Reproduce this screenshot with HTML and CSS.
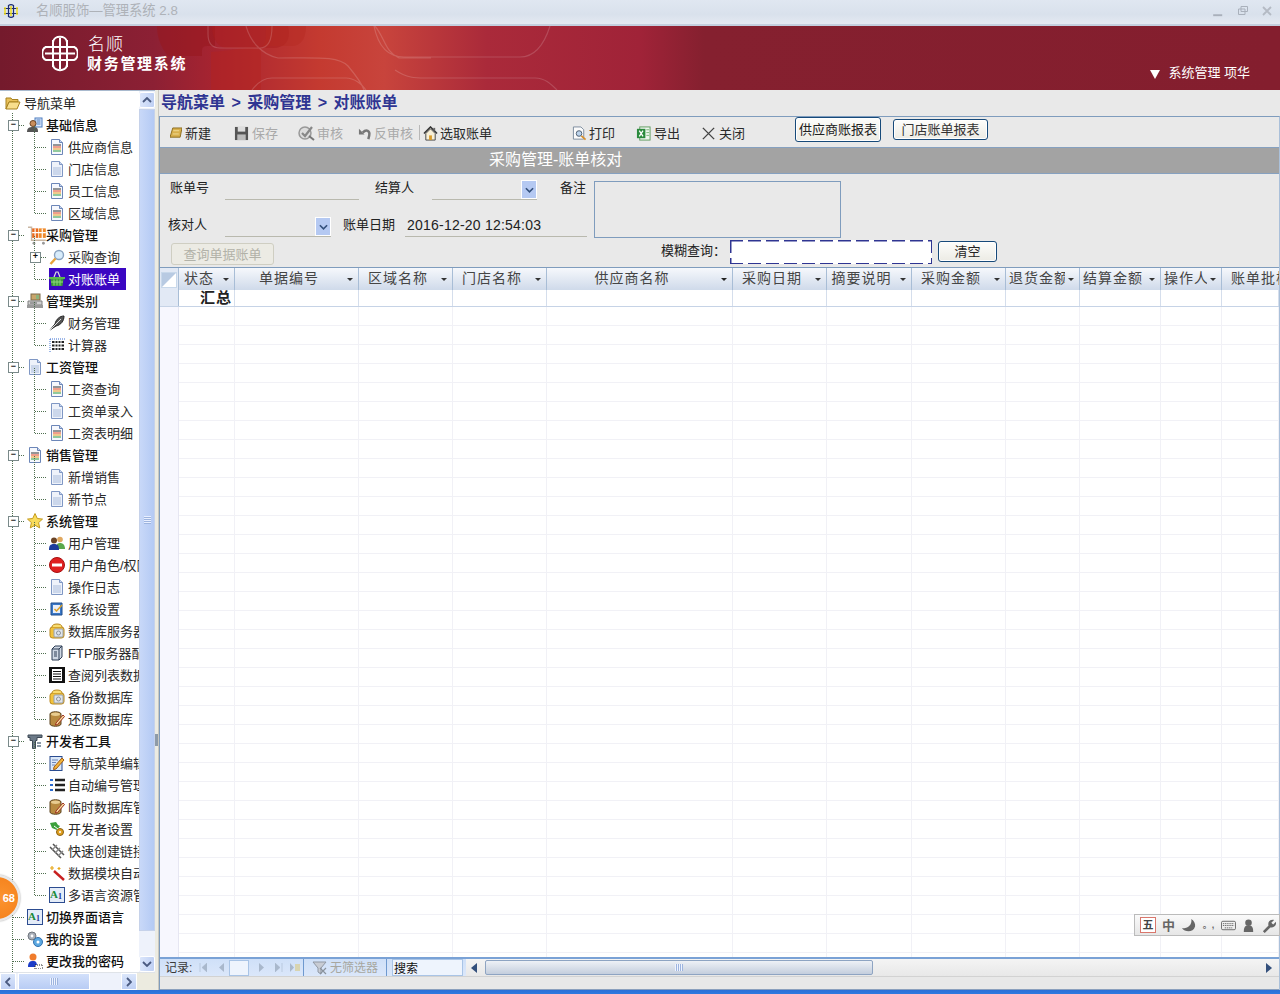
FILE: index.html
```html
<!DOCTYPE html>
<html lang="zh-CN">
<head>
<meta charset="utf-8">
<title>名顺服饰—管理系统 2.8</title>
<link rel="stylesheet" href="styles.css">
</head>
<body>
<svg class="defs" width="0" height="0" aria-hidden="true">
  <symbol id="doc" viewBox="0 0 16 16"><path d="M2.500.5h8l3 3v12h-11z" fill="#f6f8fd" stroke="#6c86b8"/><path d="M10.500.5v3h3" fill="#c8d6ee" stroke="#6c86b8"/><path d="M4 6h8" stroke="#333"/><path d="M4 8h8" stroke="#e8441c"/><path d="M4 10h8" stroke="#e89a1c"/><path d="M4 12h8" stroke="#2c9a3c"/></symbol>
  <symbol id="docg" viewBox="0 0 16 16"><path d="M2.500.5h8l3 3v12h-11z" fill="#eef2fa" stroke="#7f97c4"/><path d="M10.500.5v3h3" fill="#c8d6ee" stroke="#7f97c4"/><path d="M4 7h8M4 9h8M4 11h8M4 13h8" stroke="#a9bcdc"/></symbol>
  <symbol id="folder" viewBox="0 0 16 16"><path d="M1 3h5l1 1.500h6V7H4L1 14z" fill="#e9c15a" stroke="#a7811f"/><path d="M4 7h11l-3 7H1z" fill="#f8de8c" stroke="#a7811f"/></symbol>
  <symbol id="person" viewBox="0 0 16 16"><rect x="8" y="1" width="7" height="9" fill="#dbe8fb" stroke="#4c7cc0"/><path d="M9.500 3h4M9.500 5h4M9.500 7h4" stroke="#4c7cc0"/><circle cx="6" cy="6.500" r="3" fill="#c98d5c" stroke="#6a4426"/><path d="M0 15c0-4 2-5 6-5s5 1 5 5z" fill="#555"/></symbol>
  <symbol id="cart" viewBox="0 0 16 16"><path d="M0 1h3v11h12" fill="none" stroke="#c9b7a4" stroke-width="1.200"/><rect x="3.500" y="2" width="5" height="8" fill="#e86a1e"/><rect x="9" y="2" width="6" height="8" fill="#f08a2a"/><path d="M3.500 5.500h11.500M6 2v8M12 2v8" stroke="#fff"/><circle cx="5" cy="14.500" r="1.200" fill="#999"/><circle cx="13" cy="14.500" r="1.200" fill="#999"/></symbol>
  <symbol id="search" viewBox="0 0 16 16"><circle cx="10" cy="6" r="4.500" fill="#d8ecfb" stroke="#8aa3c0" stroke-width="1.400"/><path d="M6.500 9.500L1.500 15" stroke="#e8a23a" stroke-width="2.400"/></symbol>
  <symbol id="basket" viewBox="0 0 16 16"><path d="M5 6l2-5h2l2 5" fill="none" stroke="#ddd" stroke-width="1.200"/><path d="M0 6h16v2H0z" fill="#5cb84c"/><path d="M1.500 8h13l-1 7h-11z" fill="#3e9a3a"/><path d="M5 8.500v6M8 8.500v6M11 8.500v6M2 11h12" stroke="#8fd67c"/></symbol>
  <symbol id="register" viewBox="0 0 16 16"><rect x="4" y="1" width="9" height="6" fill="#c9a56a" stroke="#7a6a4a"/><path d="M9 2h3v4H9z" fill="#8bb37c"/><path d="M1 8h14v4H1z" fill="#cfcfcf" stroke="#808080"/><path d="M0 12h16v3H0z" fill="#9a9a9a"/><path d="M3 10h7" stroke="#666"/></symbol>
  <symbol id="feather" viewBox="0 0 16 16"><path d="M1 15L6 9C7 4 11 1 15 1c0 5-3 9-8 10z" fill="#555" stroke="#222"/><path d="M1 15L12 4" stroke="#ddd"/></symbol>
  <symbol id="calc" viewBox="0 0 16 16"><path d="M1 2h15" stroke="#3a6fd0" stroke-dasharray="1 1"/><path d="M1 2v13" stroke="#3a6fd0" stroke-dasharray="1 1"/><path d="M3 4h12v2H3zM3 7.500h12v2H3zM3 11h12v2H3z" fill="#222"/><path d="M6 4v9M9 4v9M12 4v9" stroke="#fff"/></symbol>
  <symbol id="star" viewBox="0 0 16 16"><path d="M8 .5l2.300 5 5.200.6-3.900 3.500 1.100 5.300L8 12.200l-4.700 2.700 1.100-5.300L.5 6.100l5.200-.6z" fill="#f9dc5c" stroke="#c49a1c"/></symbol>
  <symbol id="users" viewBox="0 0 16 16"><circle cx="11" cy="4.500" r="2.800" fill="#e0a860"/><path d="M7 14c0-4 1-6 4-6s5 2 5 6z" fill="#5aa84c"/><circle cx="5" cy="5.500" r="3" fill="#6a4426"/><path d="M0 15c0-4 1-6 5-6s5 2 5 6z" fill="#1c3c9c"/></symbol>
  <symbol id="stop" viewBox="0 0 16 16"><circle cx="8" cy="8" r="7.500" fill="#e02020" stroke="#a81010"/><rect x="3" y="6.500" width="10" height="3" fill="#fff"/></symbol>
  <symbol id="settings" viewBox="0 0 16 16"><path d="M2 2h11v12H2z" fill="#3a78c8" stroke="#1f4c8c"/><rect x="4" y="4" width="7" height="8" fill="#e8eef8"/><path d="M5.500 8l2 2L13 4" fill="none" stroke="#e0a020" stroke-width="1.400"/></symbol>
  <symbol id="db" viewBox="0 0 16 16"><rect x="1" y="4" width="14" height="11" rx="2.500" fill="#f2c23c" stroke="#b8861c"/><path d="M3 4c0-2 2-3 5-3s5 1 5 3" fill="#f8dc70" stroke="#b8861c"/><rect x="5" y="6" width="9" height="8" rx="1" fill="#dfe4ea" stroke="#98a0aa"/><circle cx="9.500" cy="10" r="2" fill="none" stroke="#8a929c"/></symbol>
  <symbol id="server" viewBox="0 0 16 16"><path d="M3 4l3-3h7v11l-3 3H3z" fill="#cfd8e4" stroke="#2c3c54"/><path d="M3 4h7v11M10 4l3-3" fill="none" stroke="#2c3c54"/><path d="M5 7h3M5 9h3M5 11h3" stroke="#2c3c54"/></symbol>
  <symbol id="listb" viewBox="0 0 16 16"><rect width="16" height="16" fill="#111"/><rect x="3" y="2" width="10" height="12" fill="#fff"/><path d="M4 4.500h8M4 7h8M4 9.500h8M4 12h8" stroke="#111"/></symbol>
  <symbol id="cyl" viewBox="0 0 16 16"><path d="M1 3c0-3 11-3 11 0v10c0 3-11 3-11 0z" fill="#b88a40" stroke="#5c4420"/><ellipse cx="6.500" cy="3.300" rx="4.500" ry="1.700" fill="#e8cc90"/><path d="M7 12l7-8 1.500 1.500-7 8-2 .5z" fill="#f5e0a0" stroke="#a03020"/></symbol>
  <symbol id="tools" viewBox="0 0 16 16"><path d="M1 2h14v2.500h-5v3H8.500v8h-3v-8H3V4.500H1z" fill="#6c7a88" stroke="#3c4854"/><path d="M10 9h4v2h-4zM10 12h4v2h-4z" fill="#8a98a6"/></symbol>
  <symbol id="edit" viewBox="0 0 16 16"><rect x="1" y="1.500" width="12" height="14" fill="#dbe8f8" stroke="#2a4c90"/><path d="M3 5h6M3 7.500h4M3 10h3" stroke="#6c86b8"/><path d="M5 12l8-9 2 2-8 9-2.500.5z" fill="#f2b43a" stroke="#a05a10"/></symbol>
  <symbol id="numlist" viewBox="0 0 16 16"><path d="M1 3h3M1 8h3M1 13h3" stroke="#2a6ad0" stroke-width="2"/><path d="M6 3h10M6 8h10M6 13h10" stroke="#222" stroke-width="2.400"/></symbol>
  <symbol id="gears" viewBox="0 0 16 16"><path d="M1 2l6-1 2 3 2 1-3 4-5-2z" fill="#3ca03c"/><circle cx="11" cy="11" r="3.500" fill="#e0a020" stroke="#8a6010"/><circle cx="11" cy="11" r="1" fill="#fff"/><path d="M5 5l4 3" stroke="#fff"/></symbol>
  <symbol id="chain" viewBox="0 0 16 16"><path d="M1 4l11 11M4 1l11 11" stroke="#555" stroke-width="1.500"/><path d="M3 7L8 2M6 10l5-5M9 13l5-5" stroke="#888" stroke-width="1.400"/></symbol>
  <symbol id="wand" viewBox="0 0 16 16"><path d="M5 6l10 9" stroke="#c82020" stroke-width="2.400"/><path d="M3 1v4M1 3h4M10 2v3M8.500 3.500h3" stroke="#e8a81c" stroke-width="1.200"/></symbol>
  <symbol id="cogs" viewBox="0 0 16 16"><circle cx="5" cy="5" r="4" fill="#a8aeb8" stroke="#70767e"/><circle cx="5" cy="5" r="1.400" fill="#fff"/><circle cx="11" cy="11" r="4.500" fill="#5ca8e0" stroke="#3070b0"/><circle cx="11" cy="11" r="1.500" fill="#fff"/></symbol>
  <symbol id="userkey" viewBox="0 0 16 16"><circle cx="6" cy="4" r="3.500" fill="#f07c2c"/><path d="M1 14c0-5 2-6 5-6s4 1 4 6z" fill="#1c3cc8"/><path d="M8 12h8v4H8z" fill="#fff" stroke="#222" stroke-dasharray="1 1"/></symbol>
  <symbol id="pen" viewBox="0 0 13 14"><path d="M3 1h10l-2 10H0z" fill="#d8b04c" stroke="#8a6a1c"/><path d="M3.500 4h6.500M3 7.500h6.500" stroke="#f2dc98"/></symbol>
  <symbol id="floppy" viewBox="0 0 16 16"><path d="M1 1h14v14H1z" fill="#555"/><rect x="4" y="1" width="8" height="5" fill="#ddd"/><rect x="3.500" y="9" width="9" height="6" fill="#bbb"/></symbol>
  <symbol id="check" viewBox="0 0 18 16"><circle cx="7" cy="8" r="6" fill="#ddd" stroke="#999" stroke-width="1.500"/><path d="M4 8l3 3 7-9" fill="none" stroke="#888" stroke-width="2.200"/><path d="M11 11l5 4" stroke="#777" stroke-width="2"/></symbol>
  <symbol id="undo" viewBox="0 0 16 16"><path d="M5 7c4-4 8-2 7 3l-1 4" fill="none" stroke="#777" stroke-width="2.600"/><path d="M1 3v6h6z" fill="#777"/></symbol>
  <symbol id="house" viewBox="0 0 16 16"><path d="M1 8l7-7 7 7" fill="none" stroke="#333" stroke-width="1.600"/><path d="M3 8v7h10V8L8 3z" fill="#f8f0d8" stroke="#444"/><rect x="6.500" y="10" width="3" height="5" fill="#d89c2c"/><rect x="11" y="2" width="2" height="3" fill="#666"/></symbol>
  <symbol id="preview" viewBox="0 0 16 16"><path d="M1.500 1h8l3 3v10h-11z" fill="#fbfbfb" stroke="#7a8a9c"/><circle cx="7.500" cy="8" r="3" fill="#bcd4ec" stroke="#4a5a6c"/><path d="M10 10.500l4.500 4" stroke="#d8902c" stroke-width="2"/></symbol>
  <symbol id="excel" viewBox="0 0 16 16"><rect x="4" y="1" width="11" height="14" fill="#eef6ee" stroke="#5c9a5c"/><path d="M1 3h9v10H1z" fill="#2a8a3c"/><path d="M3.500 5l4 6M7.500 5l-4 6" stroke="#fff" stroke-width="1.400"/><path d="M11 4h3M11 7h3M11 10h3" stroke="#7ab87a"/></symbol>
  <symbol id="close" viewBox="0 0 16 16"><path d="M2 2l12 12M14 2L2 14" stroke="#444" stroke-width="1.500"/></symbol>
</svg>

<header class="titlebar">
  <svg class="appicon" viewBox="0 0 14 14"><path d="M0 4.500h14M0 9.500h14M4.500 1v12M9.500 1v12M4.500 1.500C6 .5 8 .5 9.500 1.500M4.500 12.500c1.500 1 3.500 1 5 0" fill="none" stroke="#1c2c70" stroke-width="1.200"/><path d="M1 3v8M13 3v8M7 2v10" stroke="#f2e020" stroke-width="1.500"/></svg>
  <span class="apptitle">名顺服饰—管理系统 2.8</span>
  <span class="winbtns">
    <svg viewBox="0 0 10 10" class="wb wide"><path d="M1 8.500h7.500" stroke="#a9b0bb" stroke-width="1.600"/></svg>
    <svg viewBox="0 0 10 10" class="wb"><path d="M3 .5h6.500v5H3zM.5 3h6.500v5.500H.5z" fill="none" stroke="#a9b0bb"/></svg>
    <svg viewBox="0 0 10 10" class="wb"><path d="M1 1l8 8M9 1L1 9" stroke="#b4bac4" stroke-width="1.800"/></svg>
  </span>
</header>

<section class="banner">
  <svg class="bannerart" viewBox="0 0 1280 64" preserveAspectRatio="none">
    <defs>
      <linearGradient id="bg" x1="0" x2="1" y1="0" y2="0">
        <stop offset="0" stop-color="#741a2c"/><stop offset=".12" stop-color="#8c2034"/><stop offset=".17" stop-color="#a82430"/><stop offset=".25" stop-color="#c43a30"/><stop offset=".3" stop-color="#c8443c"/><stop offset=".38" stop-color="#aa2a3a"/><stop offset=".5" stop-color="#a02338"/><stop offset=".55" stop-color="#85202f"/><stop offset="1" stop-color="#841e2e"/>
      </linearGradient>
    </defs>
    <rect width="1280" height="64" fill="url(#bg)"/>
    <path d="M157 0h58v20h-8c-6 0-5 4-5 10H168c-8-10-11-20-11-30z" fill="#98181e" opacity=".55"/>
    <path d="M212 0h76c3 12-1 22-15 22h-46c-9 0-15-10-15-22z" fill="#a91d1e" opacity=".5"/>
    <path d="M266 0h40c0 14-6 20-14 20h-30c4 0 4-10 4-20z" fill="#b52a22" opacity=".45"/>
    <path d="M211 24v40h-50l0-38c30-2 35-6 50-2z" fill="#b3231f" opacity=".45" transform="translate(50 0)"/>
    <path d="M208 0v8c0 10 4 14 12 14h40c8 0 12-8 12-22M246 0c4 14 14 28 32 32 40 0 60-2 70 8 10 12 14 18 16 24M375 0c10 12 10 26 24 32h32M374 0c4 20 14 31 30 31h116c14 0 24-12 30-31M395 44c12 8 20 8 30 8h110c10 0 16 6 22 12M252 64c6-8 12-12 20-12h74c8 0 16 6 20 12" fill="none" stroke="#fff" stroke-opacity=".16" stroke-width="1.200"/>
  </svg>
  <div class="logo">
    <svg class="logomark" viewBox="0 0 36 37"><path d="M3 12h30M3 18.500h30M3 25h30M11 5v27M18 3v31M25 5v27M11 7c1-7 13-7 14 0M11 30c1 7 13 7 14 0M4 12c-5 2-5 11 0 13M32 12c5 2 5 11 0 13" fill="none" stroke="#fff" stroke-width="2"/></svg>
    <div class="logotext">
      <div class="logo1">名顺</div>
      <div class="logo2">财务管理系统</div>
    </div>
  </div>
  <div class="usr"><span class="caret"></span><span>系统管理 项华</span></div>
</section>

<main class="main">
  <aside class="side">
    <div class="sidetop">
      <nav class="tree">
        <div class="row"><svg class="ic0"><use href="#folder"/></svg><span class="t0">导航菜单</span></div>
        <ul class="l1">
          <li>
            <div class="row r1 ex"><span class="lab"><svg class="ic"><use href="#person"/></svg>基础信息</span></div>
            <ul class="l2">
              <li class="row r2"><span class="lab"><svg class="ic"><use href="#doc"/></svg>供应商信息</span></li>
              <li class="row r2"><span class="lab"><svg class="ic"><use href="#docg"/></svg>门店信息</span></li>
              <li class="row r2"><span class="lab"><svg class="ic"><use href="#doc"/></svg>员工信息</span></li>
              <li class="row r2"><span class="lab"><svg class="ic"><use href="#doc"/></svg>区域信息</span></li>
            </ul>
          </li>
          <li>
            <div class="row r1 ex"><span class="lab"><svg class="ic big"><use href="#cart"/></svg>采购管理</span></div>
            <ul class="l2">
              <li class="row r2 ex plus"><span class="lab"><svg class="ic"><use href="#search"/></svg>采购查询</span></li>
              <li class="row r2"><span class="lab sel"><svg class="ic"><use href="#basket"/></svg>对账账单</span></li>
            </ul>
          </li>
          <li>
            <div class="row r1 ex"><span class="lab"><svg class="ic"><use href="#register"/></svg>管理类别</span></div>
            <ul class="l2">
              <li class="row r2"><span class="lab"><svg class="ic"><use href="#feather"/></svg>财务管理</span></li>
              <li class="row r2"><span class="lab"><svg class="ic"><use href="#calc"/></svg>计算器</span></li>
            </ul>
          </li>
          <li>
            <div class="row r1 ex"><span class="lab"><svg class="ic"><use href="#docg"/></svg>工资管理</span></div>
            <ul class="l2">
              <li class="row r2"><span class="lab"><svg class="ic"><use href="#doc"/></svg>工资查询</span></li>
              <li class="row r2"><span class="lab"><svg class="ic"><use href="#docg"/></svg>工资单录入</span></li>
              <li class="row r2"><span class="lab"><svg class="ic"><use href="#doc"/></svg>工资表明细</span></li>
            </ul>
          </li>
          <li>
            <div class="row r1 ex"><span class="lab"><svg class="ic"><use href="#doc"/></svg>销售管理</span></div>
            <ul class="l2">
              <li class="row r2"><span class="lab"><svg class="ic"><use href="#docg"/></svg>新增销售</span></li>
              <li class="row r2"><span class="lab"><svg class="ic"><use href="#docg"/></svg>新节点</span></li>
            </ul>
          </li>
          <li>
            <div class="row r1 ex"><span class="lab"><svg class="ic"><use href="#star"/></svg>系统管理</span></div>
            <ul class="l2">
              <li class="row r2"><span class="lab"><svg class="ic"><use href="#users"/></svg>用户管理</span></li>
              <li class="row r2"><span class="lab"><svg class="ic"><use href="#stop"/></svg>用户角色/权限</span></li>
              <li class="row r2"><span class="lab"><svg class="ic"><use href="#docg"/></svg>操作日志</span></li>
              <li class="row r2"><span class="lab"><svg class="ic"><use href="#settings"/></svg>系统设置</span></li>
              <li class="row r2"><span class="lab"><svg class="ic"><use href="#db"/></svg>数据库服务器</span></li>
              <li class="row r2"><span class="lab"><svg class="ic"><use href="#server"/></svg>FTP服务器配置</span></li>
              <li class="row r2"><span class="lab"><svg class="ic"><use href="#listb"/></svg>查阅列表数据</span></li>
              <li class="row r2"><span class="lab"><svg class="ic"><use href="#db"/></svg>备份数据库</span></li>
              <li class="row r2"><span class="lab"><svg class="ic"><use href="#cyl"/></svg>还原数据库</span></li>
            </ul>
          </li>
          <li>
            <div class="row r1 ex"><span class="lab"><svg class="ic"><use href="#tools"/></svg>开发者工具</span></div>
            <ul class="l2">
              <li class="row r2"><span class="lab"><svg class="ic"><use href="#edit"/></svg>导航菜单编辑</span></li>
              <li class="row r2"><span class="lab"><svg class="ic"><use href="#numlist"/></svg>自动编号管理</span></li>
              <li class="row r2"><span class="lab"><svg class="ic"><use href="#cyl"/></svg>临时数据库管理</span></li>
              <li class="row r2"><span class="lab"><svg class="ic"><use href="#gears"/></svg>开发者设置</span></li>
              <li class="row r2"><span class="lab"><svg class="ic"><use href="#chain"/></svg>快速创建链接</span></li>
              <li class="row r2"><span class="lab"><svg class="ic"><use href="#wand"/></svg>数据模块自动</span></li>
              <li class="row r2"><span class="lab"><span class="ic fonticon"><b>A</b><em>1</em></span>多语言资源管理</span></li>
            </ul>
          </li>
          <li class="row r1"><span class="lab"><span class="ic fonticon"><b>A</b><em>1</em></span>切换界面语言</span></li>
          <li class="row r1"><span class="lab"><svg class="ic"><use href="#cogs"/></svg>我的设置</span></li>
          <li class="row r1"><span class="lab"><svg class="ic"><use href="#userkey"/></svg>更改我的密码</span></li>
        </ul>
      </nav>
      <div class="vscroll">
        <span class="sbtn"><svg viewBox="0 0 10 6" class="chev"><path d="M1 5l4-4 4 4" fill="none" stroke="#4a5a80" stroke-width="1.800"/></svg></span>
        <span class="vthumb"><i class="grip"></i></span>
        <span class="sbtn"><svg viewBox="0 0 10 6" class="chev"><path d="M1 1l4 4 4-4" fill="none" stroke="#4a5a80" stroke-width="1.800"/></svg></span>
      </div>
    </div>
    <div class="hscroll">
      <span class="hbtn"><svg viewBox="0 0 6 10" class="chevh"><path d="M5 1L1 5l4 4" fill="none" stroke="#4a5a80" stroke-width="1.800"/></svg></span>
      <span class="hthumb"><i class="hgrip"></i></span>
      <span class="hspace"></span>
      <span class="hbtn"><svg viewBox="0 0 6 10" class="chevh"><path d="M1 1l4 4-4 4" fill="none" stroke="#4a5a80" stroke-width="1.800"/></svg></span>
      <span class="hcorner"></span>
    </div>
  </aside>
  <div class="split"><i class="splitgrip"></i></div>

  <section class="content">
    <h1 class="crumb">导航菜单 &gt; 采购管理 &gt; 对账账单</h1>
    <div class="panel">
      <div class="toolbar">
        <span class="tool m10"><svg class="tipen"><use href="#pen"/></svg>新建</span>
        <span class="tool off m23"><svg class="ti"><use href="#floppy"/></svg>保存</span>
        <span class="tool off m20"><svg class="ti2"><use href="#check"/></svg>审核</span>
        <span class="tool off m15 t1"><svg class="ti"><use href="#undo"/></svg>反审核</span>
        <span class="tsep"></span>
        <span class="tool m3 t2"><svg class="ti"><use href="#house"/></svg>选取账单</span>
        <span class="tool m80 t2"><svg class="ti"><use href="#preview"/></svg>打印</span>
        <span class="tool m21"><svg class="ti"><use href="#excel"/></svg>导出</span>
        <span class="tool m21"><svg class="ti"><use href="#close"/></svg>关闭</span>
        <button class="rbtn rbtn1">供应商账报表</button>
        <button class="rbtn rbtn2">门店账单报表</button>
      </div>
      <div class="band">采购管理-账单核对</div>
      <form class="form">
        <div class="formtop">
          <div class="formleft">
            <div class="frow">
              <label class="f1">账单号</label><span class="under w134"></span>
              <label class="f2">结算人</label><span class="under combo w105"><i class="cbtn"><svg viewBox="0 0 10 6" class="cchev"><path d="M1 1l4 4 4-4" fill="none" stroke="#34507c" stroke-width="1.800"/></svg></i></span>
              <label class="f3">备注</label>
            </div>
            <div class="frow">
              <label class="f4">核对人</label><span class="under combo w106"><i class="cbtn"><svg viewBox="0 0 10 6" class="cchev"><path d="M1 1l4 4 4-4" fill="none" stroke="#34507c" stroke-width="1.800"/></svg></i></span>
              <label class="f5">账单日期</label><span class="under datev">2016-12-20 12:54:03</span>
            </div>
          </div>
          <div class="memo"></div>
        </div>
        <div class="frow3">
          <button type="button" class="qbtn">查询单据账单</button>
          <label class="fuzzy">模糊查询：</label>
          <span class="fuzzybox"></span>
          <button type="button" class="rbtn clear">清空</button>
        </div>
      </form>

      <div class="grid">
        <div class="cols head">
          <div class="hc sel0"><i class="corner"></i></div>
          <div class="hc"><span>状态</span><i class="sort"></i></div>
          <div class="hc"><span>单据编号</span><i class="sort"></i></div>
          <div class="hc"><span>区域名称</span><i class="sort"></i></div>
          <div class="hc"><span>门店名称</span><i class="sort"></i></div>
          <div class="hc"><span>供应商名称</span><i class="sort pin"></i></div>
          <div class="hc"><span>采购日期</span><i class="sort"></i></div>
          <div class="hc"><span>摘要说明</span><i class="sort"></i></div>
          <div class="hc"><span>采购金额</span><i class="sort"></i></div>
          <div class="hc narrow"><span>退货金额</span><i class="sort"></i></div>
          <div class="hc narrow"><span>结算金额</span><i class="sort"></i></div>
          <div class="hc narrow"><span>操作人</span><i class="sort"></i></div>
          <div class="hc last"><span>账单批核</span></div>
        </div>
        <div class="cols total">
          <div class="tc sel0"></div><div class="tc sum">汇总</div><div class="tc"></div><div class="tc"></div><div class="tc"></div><div class="tc"></div><div class="tc"></div><div class="tc"></div><div class="tc"></div><div class="tc"></div><div class="tc"></div><div class="tc"></div><div class="tc"></div>
        </div>
        <div class="cols blank">
          <div class="bc bsel"></div><div class="bc"></div><div class="bc"></div><div class="bc"></div><div class="bc"></div><div class="bc"></div><div class="bc"></div><div class="bc"></div><div class="bc"></div><div class="bc"></div><div class="bc"></div><div class="bc"></div><div class="bc"></div>
        </div>
        <div class="foot">
          <div class="nav">
            <span class="rec">记录:</span>
            <svg class="n n1" viewBox="0 0 8 9"><path d="M1 0v9M8 0v9L3 4.500z" fill="#a9b8cc" stroke="#a9b8cc" stroke-width=".6"/></svg>
            <svg class="n n2" viewBox="0 0 6 9"><path d="M6 0v9L1 4.500z" fill="#a9b8cc"/></svg>
            <span class="pageno"></span>
            <svg class="n n3" viewBox="0 0 6 9"><path d="M0 0v9l5-4.500z" fill="#a9b8cc"/></svg>
            <svg class="n n4" viewBox="0 0 8 9"><path d="M7 0v9M0 0v9l5-4.500z" fill="#a9b8cc" stroke="#a9b8cc" stroke-width=".6"/></svg>
            <svg class="n n5" viewBox="0 0 10 9"><path d="M0 0v9l4-4.500z" fill="#a9b8cc"/><path d="M5 1h5v7H5z" fill="#d8d4b0"/></svg>
          </div>
          <div class="filter"><svg class="fi" viewBox="0 0 16 14"><path d="M1 1h13L9 7v6L6 11V7z" fill="#c8ccd4" stroke="#9098a4"/><path d="M8 7l6 6M14 7l-6 6" stroke="#8a929c" stroke-width="1.200"/></svg>无筛选器</div>
          <div class="searchwrap"><span class="searchbox">搜索</span></div>
          <div class="gridh">
            <svg class="arr" viewBox="0 0 6 10"><path d="M6 0v10L0 5z" fill="#34507c"/></svg>
            <span class="gthumb"><i class="hgrip"></i></span>
            <span class="gtrack"></span>
            <svg class="arr" viewBox="0 0 6 10"><path d="M0 0v10l6-5z" fill="#34507c"/></svg>
          </div>
        </div>
        <div class="status"></div>
      </div>
    </div>
  </section>
</main>
<div class="taskstrip"></div>

<div class="badge">68</div>
<div class="ime">
  <span class="imei five">五</span>
  <span class="imei zh">中</span>
  <svg class="imes" viewBox="0 0 16 16"><path d="M11 1c1 6-3 10-10 10 3 4 12 5 14-2 .6-3-1-6-4-8z" fill="#666"/></svg>
  <span class="imei dots">。,</span>
  <svg class="imes" viewBox="0 0 16 16"><rect x=".5" y="3.500" width="15" height="9" rx="1.500" fill="none" stroke="#666"/><path d="M2 6h12M2 8h12M4 10.500h8" stroke="#666" stroke-dasharray="1.500 .8"/></svg>
  <svg class="imes" viewBox="0 0 16 16"><circle cx="8" cy="5" r="3.500" fill="#666"/><path d="M3 15c0-5 1-7 5-7s5 2 5 7z" fill="#666"/></svg>
  <svg class="imes" viewBox="0 0 16 16"><path d="M2 14l6-6c-1-3 1-7 6-6l-3 3 2 2 3-3c1 4-3 7-6 6l-6 6z" fill="#666"/></svg>
</div>
</body>
</html>
```
FILE: styles.css
```css
* { box-sizing: border-box; }
html, body { margin: 0; padding: 0; }
body {
  width: 1280px; height: 994px; overflow: hidden; position: relative;
  display: flex; flex-direction: column;
  font: 13px/1 "Liberation Sans", "Noto Sans CJK SC", sans-serif;
  color: #222; background: #e9e9e9;
}
ul { list-style: none; margin: 0; padding: 0; }
i { display: block; }
.defs { position: absolute; }

/* title bar */
.titlebar {
  height: 26px; flex: none; display: flex; align-items: center; padding: 0 0 2px 4px;
  background: linear-gradient(#e0e7f1, #d9e1ec 60%, #e4e9f1); border-bottom: 2px solid #c4cfde;
}
.appicon { width: 14px; height: 14px; }
.apptitle { margin-left: 18px; font-size: 13.300px; color: #aeb2b8; }
.winbtns { margin-left: auto; display: flex; gap: 14px; padding: 0 8px 0 0; }
.wb { width: 10px; height: 10px; display: block; }
.wb.wide { width: 12px; height: 12px; margin-top: -1px; }

/* banner */
.banner {
  height: 64px; flex: none; position: relative; overflow: hidden;
  display: flex; justify-content: space-between; color: #fff;
}
.bannerart { position: absolute; left: 0; top: 0; width: 1280px; height: 64px; }
.logo { position: relative; display: flex; padding: 9px 0 0 42px; }
.logomark { width: 36px; height: 37px; }
.logotext { margin-left: 9px; }
.logo1 { font-size: 17px; font-weight: 300; letter-spacing: 1px; height: 21px; padding-top: 1px; margin-left: 1px; }
.logo2 { font-size: 15px; font-weight: 700; letter-spacing: 1.700px; }
.usr { position: relative; align-self: flex-end; display: flex; align-items: center; gap: 8px; padding: 0 30px 11px 0; font-size: 13px; }
.caret { width: 0; height: 0; border: 5px solid transparent; border-top: 9px solid #fff; border-bottom: 0; margin-top: 4px; }

/* main */
.main { flex: 1; display: flex; min-height: 0; }
.side { width: 155px; flex: none; display: flex; flex-direction: column; background: #fff; border-top: 1px solid #a9bace; }
.sidetop { flex: 1; display: flex; min-height: 0; }
.tree { width: 139px; flex: none; overflow: hidden; padding-top: 1px; background: #fff; }
.row { height: 22px; display: flex; align-items: center; white-space: nowrap; position: relative; color: #222; }
.ic0 { width: 16px; height: 16px; margin: 0 3px 0 5px; }
.t0 { color: #222; }
.l1 { margin-left: 12px; position: relative; }
.l1::before { content: ""; position: absolute; left: 0; top: -1px; bottom: 0; border-left: 1px dotted #4f6f4f; }
.l2 { margin-left: 22px; position: relative; }
.l2::before { content: ""; position: absolute; left: 0; top: -10px; bottom: 11px; border-left: 1px dotted #4f6f4f; }
.row.r1::before, .row.r2::before { content: ""; position: absolute; top: 11px; left: 1px; height: 0; border-top: 1px dotted #4f6f4f; }
.row.r1::before { width: 11px; }
.row.r2::before { width: 11px; }
.r1 { padding-left: 15px; font-weight: 500; color: #111; }
.r2 { padding-left: 15px; color: #2a2a2a; }
.lab { display: flex; align-items: center; height: 22px; }
.ic { width: 16px; height: 16px; margin-right: 3px; flex: none; }
.ic.big { width: 19px; height: 19px; margin-left: 1px; margin-right: -1px; }
.fonticon { display: block; background: #e4ecf8; border: 1px solid #2c4c90; position: relative; overflow: hidden; font-family: "Liberation Serif", serif; font-weight: 700; white-space: nowrap; }
.fonticon b { position: absolute; left: 0; top: 1px; font-size: 11px; line-height: 11px; color: #1a8a3a; }
.fonticon em { position: absolute; left: 8px; top: 5px; font-size: 8px; line-height: 8px; font-style: normal; color: #1c2c90; }
.sel { background: #3a06c2; color: #fff; padding-right: 6px; }
.ex::after {
  content: "\2212"; position: absolute; left: -4px; top: 6px; width: 9px; height: 9px;
  background: #fff; border: 1px solid #7a8a8a; color: #111;
  font: 700 9px/7px "Liberation Sans", sans-serif; text-align: center;
}
.ex.plus::after { content: "+"; }

.vscroll { width: 16px; flex: none; display: flex; flex-direction: column; gap: 1px; padding-top: 1px; background: #eef2fb; }
.sbtn { height: 16px; flex: none; display: flex; align-items: center; justify-content: center; background: linear-gradient(90deg, #dbe6fb, #bfd0f4); border: 1px solid #fff; border-radius: 2px; }
.chev { width: 10px; height: 6px; }
.vthumb { flex: 1; display: flex; align-items: center; justify-content: center; margin-bottom: 24px; background: linear-gradient(90deg, #c8d8f8, #b4caf4); border: 1px solid #fff; outline: 1px solid #c6d2ea; outline-offset: -1px; }
.grip { width: 7px; height: 8px; background: repeating-linear-gradient(#e8efff 0 1px, #9db4de 1px 2px); }
.hscroll { height: 18px; flex: none; display: flex; background: #eef2fb; border-top: 1px solid #dfe3e8; }
.hbtn { width: 16px; flex: none; display: flex; align-items: center; justify-content: center; background: linear-gradient(#dbe6fb, #bfd0f4); border: 1px solid #fff; }
.chevh { width: 6px; height: 10px; }
.hthumb { width: 72px; margin-left: 2px; display: flex; align-items: center; justify-content: center; background: linear-gradient(#d2e0fb, #b8ccf4); border: 1px solid #fff; }
.hgrip { width: 8px; height: 7px; background: repeating-linear-gradient(90deg, #eef3ff 0 1px, #9db4de 1px 2px); }
.hspace { flex: 1; }
.hcorner { width: 18px; flex: none; background: #ecebe0; }
.split { width: 4px; flex: none; display: flex; align-items: center; background: #ecebe2; border-right: 1px solid #c9c8c0; padding-top: 400px; }
.splitgrip { width: 3px; height: 12px; background: #8e9ba8; }

/* content */
.content { flex: 1; min-width: 0; display: flex; flex-direction: column; }
.crumb { margin: 0; height: 26px; flex: none; padding: 3px 0 0 2px; font-size: 16px; line-height: 20px; font-weight: 700; color: #2f3592; word-spacing: 2px; }
.panel { flex: 1; display: flex; flex-direction: column; min-height: 0; border: 1px solid #7f9cbd; border-bottom: 0; border-right-color: #aac0da; }

.toolbar { height: 30px; flex: none; display: flex; align-items: flex-start; }
.tool { display: flex; align-items: center; white-space: nowrap; color: #2a2a2a; height: 16px; margin-top: 8px; }
.tool.off { color: #a9a9a9; }
.ti { width: 15px; height: 15px; margin-right: 3px; flex: none; }
.t1 .ti { margin-right: 1px; }
.t2 .ti { margin-right: 2px; }
.tipen { width: 12px; height: 13px; margin-right: 3px; flex: none; }
.ti2 { width: 18px; height: 16px; margin-right: 1px; flex: none; }
.m3 { margin-left: 3px; }
.m10 { margin-left: 10px; }
.m15 { margin-left: 15px; }
.m20 { margin-left: 20px; }
.m21 { margin-left: 21px; }
.m23 { margin-left: 23px; }
.m80 { margin-left: 80px; }
.tsep { width: 1px; height: 15px; background: #b8b8b8; margin: 8px 0 0 6px; }
button { font: inherit; padding: 0; }
.rbtn { background: linear-gradient(#fdfdfb, #ecebe4); border: 1px solid #174a7a; border-radius: 3px; color: #222; box-shadow: inset 0 0 0 1px #fff; white-space: nowrap; }
.rbtn1 { width: 86px; height: 25px; margin-left: 50px; border-width: 1.500px; }
.rbtn2 { width: 95px; height: 21px; margin: 2px 0 0 12px; color: #333; }

.band { height: 27px; flex: none; background: #a3a3a3; border-top: 1px solid #86a1c0; border-bottom: 1px solid #86a1c0; color: #fff; font-size: 16px; line-height: 24px; padding-left: 329px; }

.form { height: 93px; flex: none; padding-top: 7px; background: #e9e9e9; }
.formtop { display: flex; height: 57px; }
.formleft { width: 434px; flex: none; display: flex; flex-direction: column; justify-content: space-between; padding-bottom: 1px; }
.frow { height: 19px; display: flex; align-items: flex-start; }
.frow label { white-space: nowrap; flex: none; }
.f1 { width: 65px; padding-left: 10px; }
.f2 { width: 73px; padding-left: 16px; }
.f3 { width: 57px; padding-left: 23px; }
.f4 { width: 65px; padding-left: 8px; }
.f5 { width: 74px; padding-left: 12px; }
.under { height: 19px; border-bottom: 1px solid #b9b9ae; flex: none; display: flex; justify-content: flex-end; }
.w134 { width: 134px; }
.w105 { width: 105px; }
.w106 { width: 106px; }
.cbtn { width: 16px; height: 19px; margin-top: -1px; background: #b5c9f2; border: 1px solid #fff; display: flex; align-items: center; justify-content: center; }
.cchev { width: 9px; height: 6px; }
.datev { width: 182px; justify-content: flex-start; padding-left: 2px; font-size: 14px; letter-spacing: .22px; color: #222; }
.memo { width: 247px; height: 57px; background: #e9e9e9; border: 1px solid #7f9cbd; }
.frow3 { height: 25px; margin-top: 2px; display: flex; align-items: flex-start; }
.qbtn { width: 103px; height: 22px; margin: 3px 0 0 11px; background: #ecebe4; border: 1px solid #cfcec2; border-radius: 3px; color: #b2b2a8; }
.fuzzy { margin: 4px 0 0 387px; width: 69px; white-space: nowrap; }
.fuzzybox {
  width: 202px; height: 24px; background-color: #fff;
  background-image:
    repeating-linear-gradient(90deg, #2f3592 0 13px, transparent 13px 18px),
    repeating-linear-gradient(90deg, #2f3592 0 13px, transparent 13px 18px),
    repeating-linear-gradient(#2f3592 0 13px, transparent 13px 18px),
    repeating-linear-gradient(#2f3592 0 13px, transparent 13px 18px);
  background-size: 100% 1.500px, 100% 1.500px, 1.500px 100%, 1.500px 100%;
  background-position: 0 0, 0 100%, 0 0, 100% 0;
  background-repeat: no-repeat;
}
.clear { width: 59px; height: 21px; margin: 1px 0 0 6px; border-width: 1.500px; }

.grid { flex: 1; display: flex; flex-direction: column; min-height: 0; border-top: 1px solid #7f9cbd; background: #fff; }
.cols { display: grid; grid-template-columns: 19px 56px 124px 94px 94px 186px 94px 85px 94px 74px 81px 61px 1fr; flex: none; }
.head { height: 22px; background: linear-gradient(#f6f8fc, #cfdaea); }
.hc { display: flex; align-items: center; border-right: 1px solid #a8bdd6; padding: 0 5px 2px 0; overflow: hidden; font-size: 14px; color: #454545; letter-spacing: 1px; }
.hc span { flex: 1; text-align: center; white-space: nowrap; padding-right: 4px; }
.hc.narrow span { min-width: 0; overflow: hidden; text-align: left; padding: 0 0 0 3px; margin-right: 3px; }
.hc.last { border-right: 0; padding: 0 0 2px 9px; }
.hc.last span { flex: none; padding: 0; }
.sel0 { background: #e2e9f5; padding: 0; }
.hc.sel0 { padding: 0; }
.corner { width: 0; height: 0; margin: 2px 0 0 2px; border-left: 14px solid transparent; border-bottom: 14px solid #fff; outline: 1px solid #c8d8ea; background: #b8cae2; }
.sort { width: 6px; height: 0; flex: none; border: 3px solid transparent; border-top: 3px solid #333; border-bottom: 0; margin-top: 2px; }
.sort.pin { border-top-color: #222; box-shadow: 5px -2px 0 -2px #333; }
.total { height: 17px; border-bottom: 1px solid #c6d3e6; }
.tc { border-right: 1px solid #d5deec; height: 16px; }
.tc.sel0 { border-right-color: #a8bdd6; }
.sum { font-size: 15px; font-weight: 700; color: #222; text-align: right; line-height: 15px; padding-right: 2px; letter-spacing: 1px; }
.blank {
  flex: 1; min-height: 0;
  background: repeating-linear-gradient(transparent 0 18px, #f1f1f6 18px 19px);
}
.bc { border-right: 1px solid #f1f1f6; }
.bsel { background: #f7f7fe; border-right-color: #e6e6f2; }
.foot { height: 19px; flex: none; display: flex; border-top: 2px solid #7aa2d6; background: #f0f0f0; }
.nav { width: 144px; flex: none; display: flex; align-items: center; position: relative; background: linear-gradient(#cfe0f8, #dbe7fa); border-right: 1px solid #6f99cf; font-size: 12px; color: #3a3a3a; padding-left: 5px; }
.rec { width: 34px; }
.n { height: 9px; display: block; flex: none; }
.n1 { width: 8px; }
.n2 { width: 6px; margin-left: 11px; }
.n3 { width: 6px; margin-left: 10px; }
.n4 { width: 8px; margin-left: 10px; }
.n5 { width: 10px; margin-left: 7px; }
.pageno { width: 20px; height: 16px; margin-left: 5px; background: #eef4fd; border: 1px solid #a9c4e6; }
.filter { width: 83px; flex: none; display: flex; align-items: center; background: linear-gradient(#cfe0f8, #dbe7fa); border-right: 1px solid #6f99cf; padding-left: 8px; color: #a7a7a0; font-size: 12px; }
.fi { width: 16px; height: 14px; margin-right: 2px; flex: none; }
.searchwrap { width: 79px; flex: none; background: linear-gradient(#cfe0f8, #dbe7fa); padding: 0 3px 0 5px; }
.searchbox { display: block; height: 17px; background: #eef4fd; border: 1px solid #a9c4e6; font-size: 12px; line-height: 18px; padding-left: 1px; color: #111; overflow: hidden; }
.gridh { flex: 1; display: flex; align-items: center; padding: 0 7px 0 5px; background: linear-gradient(#f4f4f4, #e8e8e8); }
.arr { width: 6px; height: 10px; flex: none; }
.gthumb { width: 388px; height: 15px; margin-left: 8px; display: flex; align-items: center; justify-content: center; background: linear-gradient(#eef1f6, #c4cedd); border: 1px solid #8ea4c2; border-radius: 2px; }
.gtrack { flex: 1; }
.status { height: 14px; flex: none; background: #e8e8e8; border-top: 1px solid #d2d2d2; border-bottom: 1px solid #8ba0bd; }
.taskstrip { height: 4px; flex: none; background: linear-gradient(#2b6fd6, #2f7ae0); }

/* overlays */
.badge {
  position: absolute; left: -26px; top: 875px; width: 46px; height: 46px; border-radius: 50%;
  background: radial-gradient(circle at 60% 50%, #fb9430, #f37a14); border: 2px solid #e8e8e8; box-shadow: 0 0 2px #888;
  color: #fff; font: 700 11px/42px "Liberation Sans", sans-serif; text-align: right; padding-right: 3px;
}
.ime {
  position: absolute; left: 1134px; top: 914px; width: 146px; height: 22px;
  display: flex; align-items: center; gap: 5px; padding-left: 5px;
  background: linear-gradient(#fafafa, #e6e6e6); border: 1px solid #bbb;
}
.imei { color: #666; font-size: 13px; font-weight: 700; width: 15px; text-align: center; }
.five { width: 16px; background: #fff; border: 1px solid #d9776c; color: #444; height: 16px; line-height: 14px; font-size: 11px; }
.dots { font-size: 9px; line-height: 10px; letter-spacing: 0; overflow: hidden; white-space: nowrap; }
.imes { width: 15px; height: 15px; flex: none; }
```
